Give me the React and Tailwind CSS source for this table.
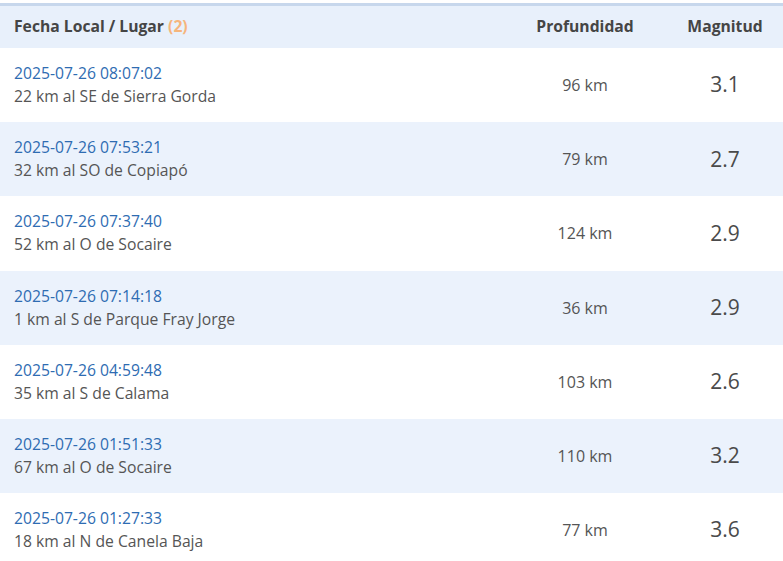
import React from 'react';

const sismos = [
  { fecha: '2025-07-26 08:07:02', lugar: '22 km al SE de Sierra Gorda', prof: '96 km', mag: '3.1' },
  { fecha: '2025-07-26 07:53:21', lugar: '32 km al SO de Copiapó', prof: '79 km', mag: '2.7' },
  { fecha: '2025-07-26 07:37:40', lugar: '52 km al O de Socaire', prof: '124 km', mag: '2.9' },
  { fecha: '2025-07-26 07:14:18', lugar: '1 km al S de Parque Fray Jorge', prof: '36 km', mag: '2.9' },
  { fecha: '2025-07-26 04:59:48', lugar: '35 km al S de Calama', prof: '103 km', mag: '2.6' },
  { fecha: '2025-07-26 01:51:33', lugar: '67 km al O de Socaire', prof: '110 km', mag: '3.2' },
  { fecha: '2025-07-26 01:27:33', lugar: '18 km al N de Canela Baja', prof: '77 km', mag: '3.6' },
];

const App = () => {
  return (
    <div className="w-[783px] h-[561px] overflow-hidden bg-white pt-[3px] font-['Open_Sans',sans-serif]">
      <div className="border-t-[3px] border-[#c7d7ec]">
        {/* Header */}
        <div className="flex items-center h-[42px] bg-[#e8f0fb] text-[15.7px] font-bold text-[#454545]">
          <div className="flex-1 pl-[14px]">
            Fecha Local / Lugar <span className="text-[#f6b57c]">(2)</span>
          </div>
          <div className="w-[164px] text-center">Profundidad</div>
          <div className="w-[116px] text-center">Magnitud</div>
        </div>

        {/* Rows */}
        {sismos.map((s, i) => (
          <div
            key={s.fecha}
            className={`flex items-center h-[74.2px] ${i % 2 === 1 ? 'bg-[#ebf2fc]' : 'bg-white'}`}
          >
            <div className="flex-1 pl-[14px] text-[15.7px] leading-[23px]">
              <div className="text-[#2e6cb2]">{s.fecha}</div>
              <div className="text-[#555]">{s.lugar}</div>
            </div>
            <div className="w-[164px] text-center text-[16px] text-[#555]">{s.prof}</div>
            <div className="w-[116px] text-center text-[21px] text-[#4a4a4a]">{s.mag}</div>
          </div>
        ))}
      </div>
    </div>
  );
};

export default App;
